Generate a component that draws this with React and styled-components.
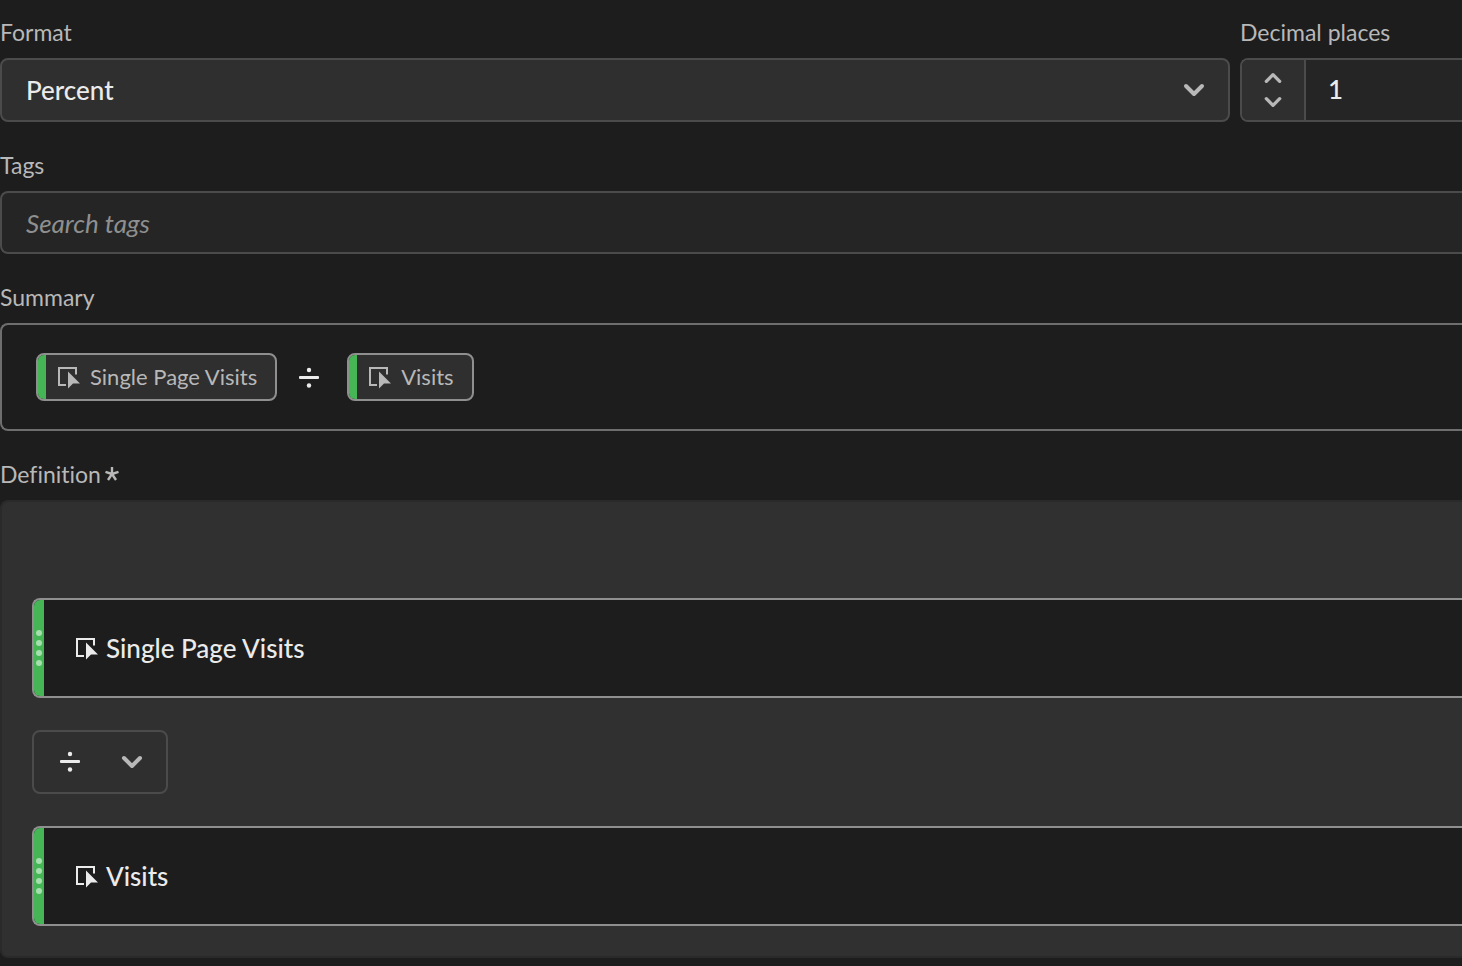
import React, { useState } from 'react';
import styled, { createGlobalStyle } from 'styled-components';

const GlobalStyle = createGlobalStyle`
  *, *::before, *::after {
    box-sizing: border-box;
  }

  body {
    margin: 0;
    background: #1d1d1d;
    color: #ebebeb;
    font-family: Lato, "Noto Sans", sans-serif;
    font-size: 26px;
    font-variant-ligatures: none;
  }

  button, input, select {
    margin: 0;
    font: inherit;
    color: inherit;
  }
`;

const Form = styled.form`
  display: flex;
  flex-direction: column;
  gap: 30px;
  padding: 19px 0 8px;
`;

const FieldRow = styled.div`
  display: grid;
  grid-template-columns: minmax(0, 1fr) 222px;
  gap: 10px;
`;

const Field = styled.div`
  display: flex;
  flex-direction: column;
  gap: 13px;
  min-width: 0;
`;

const Label = styled.label`
  display: flex;
  align-items: center;
  gap: 4px;
  font-size: 23px;
  line-height: 26px;
  color: #b8b8b8;
`;

const SelectWrap = styled.div`
  position: relative;
  height: 64px;

  & > svg {
    position: absolute;
    top: 24px;
    right: 24px;
    pointer-events: none;
  }
`;

const Select = styled.select`
  appearance: none;
  width: 100%;
  height: 100%;
  padding: 0 64px 0 24px;
  background: #2f2f2f;
  border: 2px solid #4b4b4b;
  border-radius: 8px;
  font-weight: 500;
`;

const NumberField = styled.div`
  display: flex;
  height: 64px;
  background: #252525;
  border: 2px solid #4b4b4b;
  border-right: 0;
  border-radius: 8px 0 0 8px;
  overflow: hidden;
`;

const Stepper = styled.div`
  display: flex;
  flex-direction: column;
  flex: none;
  width: 64px;
  padding: 6px 0;
  background: #2f2f2f;
  border-right: 2px solid #4b4b4b;
`;

const StepButton = styled.button`
  display: flex;
  flex: 1;
  align-items: center;
  justify-content: center;
  padding: 0;
  background: none;
  border: 0;
`;

const NumberInput = styled.input`
  flex: 1;
  min-width: 0;
  padding: 0 22px 2px;
  background: none;
  border: 0;
  outline: 0;
  font-weight: 500;
`;

const TextInput = styled.input`
  width: 100%;
  height: 63px;
  padding: 0 24px;
  background: #252525;
  border: 2px solid #4b4b4b;
  border-right: 0;
  border-radius: 8px 0 0 8px;
  outline: 0;

  &::placeholder {
    color: #8f8f8f;
    font-style: italic;
    opacity: 1;
  }
`;

const Summary = styled.div`
  display: flex;
  align-items: center;
  padding: 28px 34px;
  border: 2px solid #6e6e6e;
  border-right: 0;
  border-radius: 8px 0 0 8px;
`;

const Chip = styled.span`
  display: flex;
  align-items: center;
  gap: 10px;
  height: 48px;
  padding-right: 18px;
  background: #2f2f2f;
  border: 2px solid #8f8f8f;
  border-radius: 8px;
  overflow: hidden;
  color: #b8b8b8;
  font-size: 22px;
  line-height: 28px;
  white-space: nowrap;

  &::before {
    content: "";
    align-self: stretch;
    width: 8px;
    margin-right: 2px;
    background: #45b556;
  }
`;

const SummaryOperator = styled.span`
  display: flex;
  padding: 2px 27px 0 21px;
`;

const Definition = styled.div`
  display: flex;
  flex-direction: column;
  align-items: flex-start;
  gap: 32px;
  padding: 96px 0 30px 30px;
  background: #303030;
  border: 2px solid #2a2a2a;
  border-right: 0;
  border-radius: 8px 0 0 8px;
`;

const MetricCard = styled.div`
  display: flex;
  align-items: center;
  align-self: stretch;
  gap: 8px;
  height: 100px;
  background: #1d1d1d;
  border: 2px solid #8f8f8f;
  border-right: 0;
  border-radius: 8px 0 0 8px;
  overflow: hidden;
  font-weight: 500;
`;

const DragHandle = styled.span`
  display: flex;
  flex-direction: column;
  align-items: center;
  align-self: stretch;
  justify-content: center;
  gap: 4px;
  width: 10px;
  margin-right: 24px;
  background: #45b556;
`;

const Dot = styled.span`
  width: 6px;
  height: 6px;
  border-radius: 50%;
  background: #a6dfae;
`;

const OperatorButton = styled.button`
  display: flex;
  align-items: center;
  justify-content: space-between;
  width: 136px;
  height: 64px;
  padding: 0 22px 0 25px;
  background: #2f2f2f;
  border: 2px solid #4b4b4b;
  border-radius: 8px;
`;

const Chevron = ({ up = false, small = false }) => (
  <svg width={small ? 20 : 24} height={small ? 14 : 16} viewBox="0 0 24 16" fill="none" aria-hidden="true">
    <path
      d={up ? 'M4 12 12 4 20 12' : 'M4 4 12 12 20 4'}
      stroke="#b8b8b8"
      strokeWidth="4"
      strokeLinecap="round"
      strokeLinejoin="round"
    />
  </svg>
);

const MetricIcon = () => (
  <svg width="22" height="24" viewBox="0 0 22 24" aria-hidden="true">
    <path d="M8 20H1V3H18V9.5" fill="none" stroke="currentColor" strokeWidth="2" />
    <path d="M10 6.5V23.5L15 18.5H22Z" fill="currentColor" />
  </svg>
);

const DivideIcon = () => (
  <svg width="22" height="22" viewBox="0 0 22 22" fill="#ebebeb" aria-hidden="true">
    <circle cx="11" cy="3" r="2.2" />
    <rect x="1" y="9" width="20" height="3" rx="1" />
    <circle cx="11" cy="18.5" r="2.2" />
  </svg>
);

const RequiredIcon = () => (
  <svg width="14" height="16" viewBox="0 0 14 16" aria-hidden="true">
    <path
      d="M7 8V1M7 8 13.5 5.8M7 8 11 14M7 8 3 14M7 8 0.5 5.8"
      fill="none"
      stroke="currentColor"
      strokeWidth="2.4"
    />
  </svg>
);

const Metric = ({ name }) => (
  <MetricCard>
    <DragHandle>
      <Dot />
      <Dot />
      <Dot />
      <Dot />
    </DragHandle>
    <MetricIcon />
    {name}
  </MetricCard>
);

export default function App() {
  const [format, setFormat] = useState('percent');
  const [places, setPlaces] = useState(1);
  const [tags, setTags] = useState('');

  return (
    <>
      <GlobalStyle />
      <Form onSubmit={(e) => e.preventDefault()}>
        <FieldRow>
          <Field>
            <Label htmlFor="format">Format</Label>
            <SelectWrap>
              <Select id="format" value={format} onChange={(e) => setFormat(e.target.value)}>
                <option value="percent">Percent</option>
              </Select>
              <Chevron />
            </SelectWrap>
          </Field>
          <Field>
            <Label htmlFor="places">Decimal places</Label>
            <NumberField>
              <Stepper>
                <StepButton type="button" aria-label="Increase" onClick={() => setPlaces(places + 1)}>
                  <Chevron up small />
                </StepButton>
                <StepButton type="button" aria-label="Decrease" onClick={() => setPlaces(Math.max(0, places - 1))}>
                  <Chevron small />
                </StepButton>
              </Stepper>
              <NumberInput
                id="places"
                inputMode="numeric"
                value={places}
                onChange={(e) => setPlaces(Number(e.target.value) || 0)}
              />
            </NumberField>
          </Field>
        </FieldRow>

        <Field>
          <Label htmlFor="tags">Tags</Label>
          <TextInput
            id="tags"
            placeholder="Search tags"
            value={tags}
            onChange={(e) => setTags(e.target.value)}
          />
        </Field>

        <Field>
          <Label as="span" id="summary-label">Summary</Label>
          <Summary role="group" aria-labelledby="summary-label">
            <Chip>
              <MetricIcon />
              Single Page Visits
            </Chip>
            <SummaryOperator>
              <DivideIcon />
            </SummaryOperator>
            <Chip>
              <MetricIcon />
              Visits
            </Chip>
          </Summary>
        </Field>

        <Field>
          <Label as="span" id="definition-label">
            Definition
            <RequiredIcon />
          </Label>
          <Definition role="group" aria-labelledby="definition-label">
            <Metric name="Single Page Visits" />
            <OperatorButton type="button" aria-haspopup="listbox" aria-label="Operator: divide">
              <DivideIcon />
              <Chevron />
            </OperatorButton>
            <Metric name="Visits" />
          </Definition>
        </Field>
      </Form>
    </>
  );
}
